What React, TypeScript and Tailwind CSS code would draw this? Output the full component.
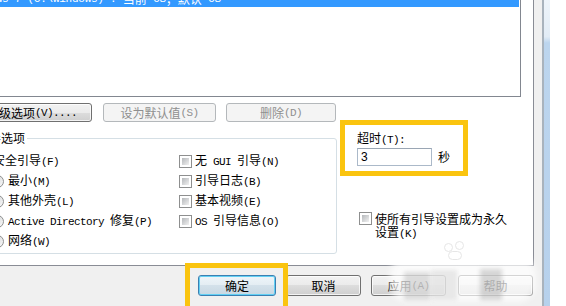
import React from "react";

const CJK_SPLIT = /([\u2E80-\u9FFF\uF900-\uFAFF\uFF00-\uFFEF\u3000-\u303F]+)/;
const CJK_TEST = /[\u2E80-\u9FFF\uF900-\uFAFF\uFF00-\uFFEF\u3000-\u303F]/;

function Tx({ t, latin = "text-[11px] tracking-[-0.6px]" }: { t: string; latin?: string }) {
  const parts = t.split(CJK_SPLIT).filter((s) => s.length > 0);
  return (
    <>
      {parts.map((s, i) =>
        CJK_TEST.test(s) ? (
          <span key={i} className="font-['Noto_Sans_CJK_SC',sans-serif] text-[12px] leading-[12px]">
            {s}
          </span>
        ) : (
          <span key={i} className={"font-['Liberation_Mono',monospace] leading-[12px] whitespace-pre " + latin}>
            {s}
          </span>
        )
      )}
    </>
  );
}

function Check() {
  return (
    <div className="w-[13px] h-[13px] shrink-0 border border-[#8e8f8f] bg-white p-[2px]">
      <div className="w-full h-full bg-linear-to-br from-[#b5b8bb] to-[#f2f2f2]" />
    </div>
  );
}

function Radio({ selected = false }: { selected?: boolean }) {
  return (
    <div className="w-[13px] h-[13px] shrink-0 rounded-full border border-[#8e8f8f] bg-linear-to-br from-[#cfd1d3] to-[#fafafa] flex items-center justify-center">
      {selected ? <div className="w-[5px] h-[5px] rounded-full bg-linear-to-br from-[#1b5e20] to-[#5fbf4f]" /> : null}
    </div>
  );
}

type BtnKind = "normal" | "disabled" | "default";

function Btn({ children, className, kind }: { children: React.ReactNode; className: string; kind: BtnKind }) {
  const base = "h-full shrink-0 rounded-[3px] border flex items-center justify-center whitespace-nowrap ";
  const k =
    kind === "disabled"
      ? "border-[#b4b8bb] bg-[#f4f4f4] text-[#8f8f8f]"
      : kind === "default"
      ? "border-[#3c7fb1] shadow-[inset_0_0_0_1px_#62d0f4] bg-[linear-gradient(#eef5f9,#e3edf3_50%,#d3e1ea_50%,#c8d8e3)] text-black"
      : "border-[#707070] shadow-[inset_0_0_0_1px_rgba(255,255,255,0.75)] bg-[linear-gradient(#f2f2f2,#ebebeb_50%,#dddddd_50%,#cfcfcf)] text-black";
  return <div className={base + k + " " + className}>{children}</div>;
}

export default function App() {
  return (
    <div className="relative w-[566px] h-[306px] overflow-hidden bg-white flex text-black font-['Noto_Sans_CJK_SC',sans-serif] text-[12px] leading-[12px]">
      {/* dialog body */}
      <div className="w-[542px] shrink-0 flex flex-col bg-[#f0f0f0]">
        {/* tab page */}
        <div className="w-[534px] h-[266px] shrink-0 bg-white border-r border-b border-[#898c95] flex flex-col">
          {/* OS list box */}
          <div className="-mt-[11px] -ml-[40px] w-[561px] h-[108px] shrink-0 border border-[#828790] bg-white pr-[1px]">
            <div className="h-[17px] bg-[#3399ff] text-white flex items-center pl-[3px] whitespace-nowrap">
              <Tx t={"Windows 7 (C:\\Windows) : 当前 OS；默认 OS"} latin="text-[11px] tracking-[-0.25px]" />
            </div>
          </div>

          {/* buttons row */}
          <div className="mt-[6px] h-[19px] flex shrink-0">
            <Btn kind="normal" className="-ml-[28px] w-[120px]">
              <Tx t="高级选项(V)...." />
            </Btn>
            <Btn kind="disabled" className="ml-[11px] w-[113px]">
              <Tx t="设为默认值(S)" />
            </Btn>
            <Btn kind="disabled" className="ml-[10px] w-[110px]">
              <Tx t="删除(D)" />
            </Btn>
          </div>

          {/* options row */}
          <div className="-mt-[2px] flex shrink-0">
            <fieldset className="mt-[12px] -ml-[34px] w-[371px] shrink-0 border border-[#d5dfe5] rounded-[3px] pl-[10px] pt-[7px] pb-[2px]">
              <legend className="-ml-[2px] px-[2px] leading-[12px]">
                <Tx t="引导选项" />
              </legend>
              <div className="flex">
                <div className="w-[202px] shrink-0 flex flex-col">
                  <div className="h-[20px] flex items-center">
                    <Check />
                    <span className="ml-[3px] whitespace-nowrap">
                      <Tx t="安全引导(F)" />
                    </span>
                  </div>
                  <div className="h-[20px] flex items-center pl-[14px]">
                    <Radio selected />
                    <span className="ml-[4px] whitespace-nowrap">
                      <Tx t="最小(M)" />
                    </span>
                  </div>
                  <div className="h-[20px] flex items-center pl-[14px]">
                    <Radio />
                    <span className="ml-[4px] whitespace-nowrap">
                      <Tx t="其他外壳(L)" />
                    </span>
                  </div>
                  <div className="h-[20px] flex items-center pl-[14px]">
                    <Radio />
                    <span className="ml-[4px] whitespace-nowrap">
                      <Tx t="Active Directory 修复(P)" />
                    </span>
                  </div>
                  <div className="h-[20px] flex items-center pl-[14px]">
                    <Radio />
                    <span className="ml-[4px] whitespace-nowrap">
                      <Tx t="网络(W)" />
                    </span>
                  </div>
                </div>
                <div className="flex flex-col">
                  <div className="h-[20px] flex items-center">
                    <Check />
                    <span className="ml-[3px] whitespace-nowrap">
                      <Tx t="无 GUI 引导(N)" />
                    </span>
                  </div>
                  <div className="h-[20px] flex items-center">
                    <Check />
                    <span className="ml-[3px] whitespace-nowrap">
                      <Tx t="引导日志(B)" />
                    </span>
                  </div>
                  <div className="h-[20px] flex items-center">
                    <Check />
                    <span className="ml-[3px] whitespace-nowrap">
                      <Tx t="基本视频(E)" />
                    </span>
                  </div>
                  <div className="h-[20px] flex items-center">
                    <Check />
                    <span className="ml-[3px] whitespace-nowrap">
                      <Tx t="OS 引导信息(O)" />
                    </span>
                  </div>
                </div>
              </div>
            </fieldset>

            {/* timeout + permanent */}
            <div className="ml-[3px] flex flex-col">
              <div className="w-[128px] h-[56px] border-[5px] border-[#fac40f] pl-[12px] pt-[7px]">
                <div className="h-[12px] whitespace-nowrap">
                  <Tx t="超时(T):" />
                </div>
                <div className="mt-[4px] flex items-center">
                  <div className="w-[75px] h-[18px] border border-[#abb9c9] border-t-[#9aa6b4] bg-white flex items-center pl-[3px] font-['Liberation_Sans',sans-serif] text-[12px]">
                    3
                  </div>
                  <span className="ml-[6px]">
                    <Tx t="秒" />
                  </span>
                </div>
              </div>
              <div className="mt-[36px] ml-[19px] flex items-start">
                <Check />
                <div className="ml-[3px] leading-[13px] whitespace-nowrap flex flex-col">
                  <div className="h-[13px]">
                    <Tx t="使所有引导设置成为永久" />
                  </div>
                  <div className="h-[13px]">
                    <Tx t="设置(K)" />
                  </div>
                </div>
              </div>
            </div>
          </div>
        </div>

        {/* bottom buttons */}
        <div className="mt-[9px] h-[21px] flex shrink-0">
          <Btn kind="default" className="ml-[198px] w-[78px]">
            <Tx t="确定" />
          </Btn>
          <Btn kind="normal" className="ml-[10px] w-[75px]">
            <Tx t="取消" />
          </Btn>
          <Btn kind="normal" className="ml-[10px] w-[75px]">
            <Tx t="应用(A)" />
          </Btn>
          <Btn kind="normal" className="ml-[12px] w-[75px]">
            <Tx t="帮助" />
          </Btn>
        </div>
      </div>

      {/* window frame on the right */}
      <div className="w-[2px] shrink-0 bg-[#a9b3bd]" />
      <div className="w-[6px] shrink-0 bg-[linear-gradient(#eef4fa,#e2ecf6_12%,#bcd5ee_14%,#b7d1ec)]" />
      <div className="flex-1 bg-white" />

      {/* annotation highlight around OK button */}
      <div className="absolute left-[185px] top-[263px] w-[103px] h-[50px] border-[5px] border-[#fac40f]" />

      {/* watermark blur */}
      <div className="absolute left-[390px] top-[256px] w-[146px] h-[46px] rounded-[18px] bg-white/70 blur-[3px]" />
      <div className="absolute left-[404px] top-[272px] w-[26px] h-[28px] bg-[#b0b0b0]/40 blur-[2px]" />
      <div className="absolute left-[431px] top-[270px] w-[26px] h-[30px] bg-[#d0d0d0]/45 blur-[2px]" />
      <div className="absolute left-[480px] top-[269px] w-[22px] h-[31px] bg-[#a0a0a0]/40 blur-[2px]" />
      <div className="absolute left-[444px] top-[243px] w-[9px] h-[9px] rounded-full border border-[#e6e6e6]" />
      <div className="absolute left-[455px] top-[241px] w-[9px] h-[9px] rounded-full border border-[#e6e6e6]" />
      <div className="absolute left-[448px] top-[251px] w-[14px] h-[9px] rounded-full border border-[#e6e6e6]" />
    </div>
  );
}
